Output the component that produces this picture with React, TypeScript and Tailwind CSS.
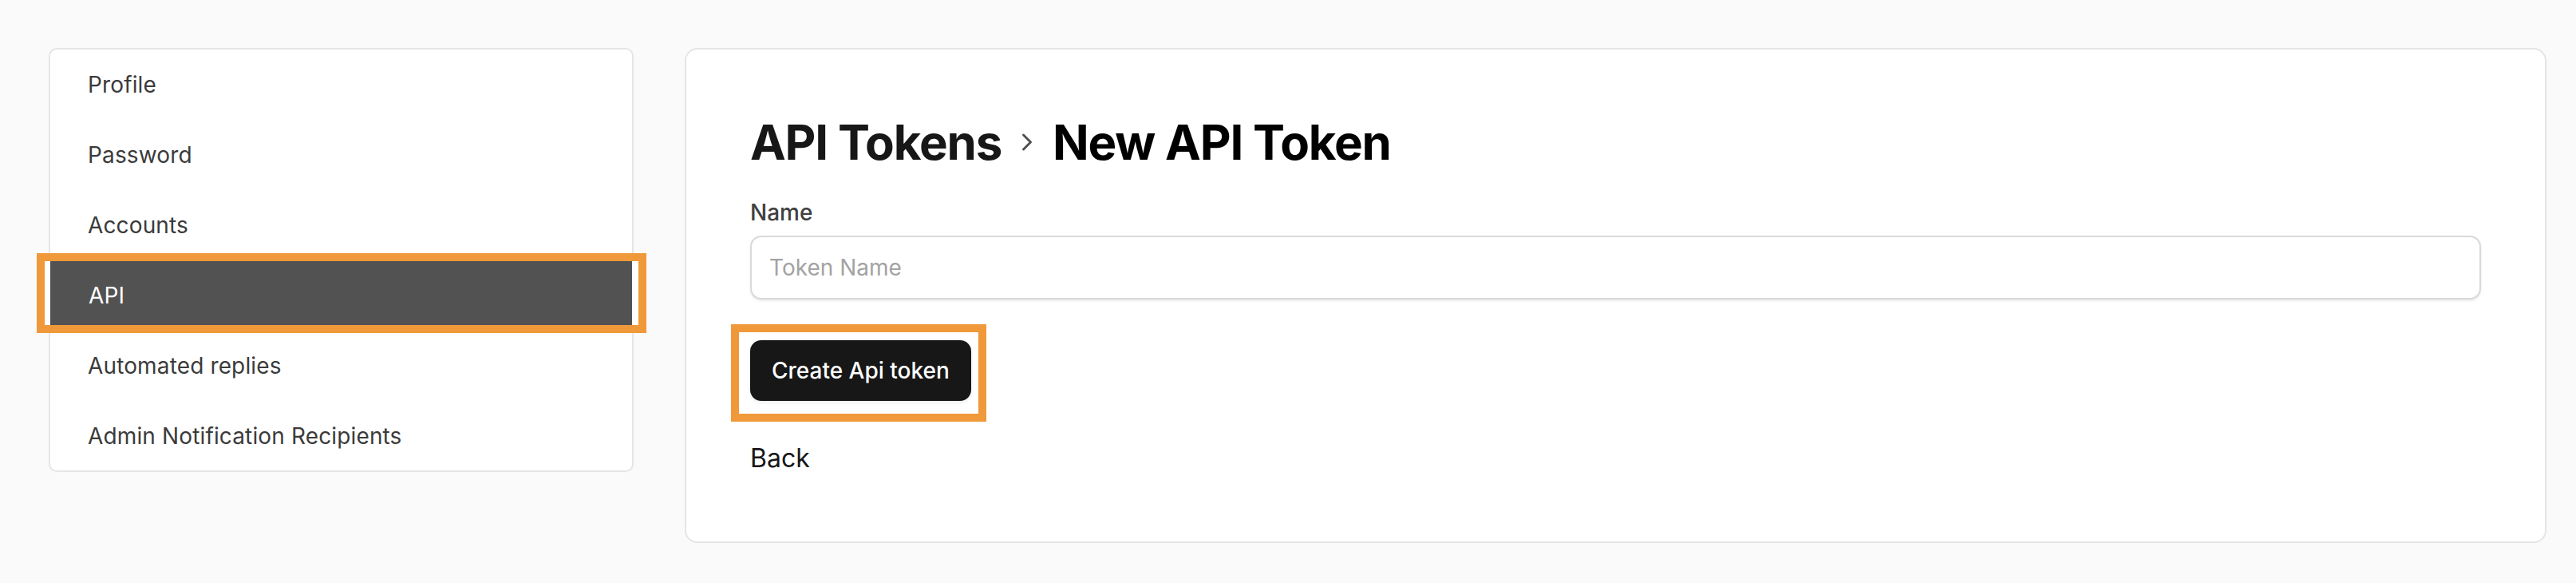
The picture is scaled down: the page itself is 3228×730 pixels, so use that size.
import React from "react";
import { ChevronRight } from "lucide-react";

const items = [
  "Profile",
  "Password",
  "Accounts",
  "API",
  "Automated replies",
  "Admin Notification Recipients",
];

const Sidebar = () => {
  return (
    <div className="w-[733px] shrink-0 self-start rounded-[10px] border-2 border-[#e5e5e5] bg-white pt-px pb-[6px]">
      <ul className="flex flex-col gap-2">
        {items.map((item) => {
          const active = item === "API";
          return (
            <li key={item} className="relative">
              <a
                href="#"
                className={
                  active
                    ? "flex h-[80px] items-center bg-[#525252] pt-[6px] pl-[48px] text-[28px] tracking-[0.005em] text-white"
                    : "flex h-[80px] items-center pt-[6px] pl-[47px] text-[28px] tracking-[0.005em] text-[#3b3b3b]"
                }
              >
                {item}
              </a>
              {active && (
                <div className="pointer-events-none absolute -top-[10px] -bottom-[10px] -left-[17px] -right-[18px] border-[10px] border-[#f0993a] shadow-[inset_7px_0_0_#ffffff,inset_-8px_0_0_#ffffff]" />
              )}
            </li>
          );
        })}
      </ul>
    </div>
  );
};

const App = () => {
  return (
    <div className="min-h-screen w-full bg-[#fafafa] pt-[60px] pl-[61px] pr-[37px] font-['Inter',sans-serif]">
      <div className="flex gap-[64px]">
        <Sidebar />
        <div className="flex-1 rounded-[16px] border-2 border-[#e5e5e5] bg-white p-[80px]">
          <h1 className="flex items-center gap-[14px] text-[60px] font-bold leading-[72px] tracking-[-0.02em]">
            <a href="#" className="text-[#171717]">
              API Tokens
            </a>
            <ChevronRight className="h-[36px] w-[36px] text-[#525252]" strokeWidth={2} />
            <span className="text-black">New API Token</span>
          </h1>

          <form className="mt-[32px] flex flex-col" onSubmit={(e) => e.preventDefault()}>
            <label htmlFor="name" className="text-[28px] font-medium leading-[40px] text-[#404040]">
              Name
            </label>
            <input
              id="name"
              type="text"
              placeholder="Token Name"
              className="mt-[9px] h-[80px] w-full rounded-[14px] border-2 border-[#d9d9d9] bg-white px-[22px] text-[28px] text-[#171717] shadow-[0_2px_3px_rgba(0,0,0,0.08)] outline-none placeholder:text-[#a3a3a3]"
            />
            <div className="mt-[51px] flex">
              <div className="relative">
                <button
                  type="submit"
                  className="h-[76px] rounded-[14px] bg-[#171717] px-[27px] text-[28px] font-medium text-white shadow-[0_2px_4px_rgba(0,0,0,0.08)]"
                >
                  Create Api token
                </button>
                <div className="pointer-events-none absolute -top-[20px] -bottom-[26px] -left-[24px] -right-[19px] border-[10px] border-[#f0993a]" />
              </div>
            </div>
            <a href="#" className="mt-[48px] text-[32px] leading-[48px] text-[#171717]">
              Back
            </a>
          </form>
        </div>
      </div>
    </div>
  );
};

export default App;
